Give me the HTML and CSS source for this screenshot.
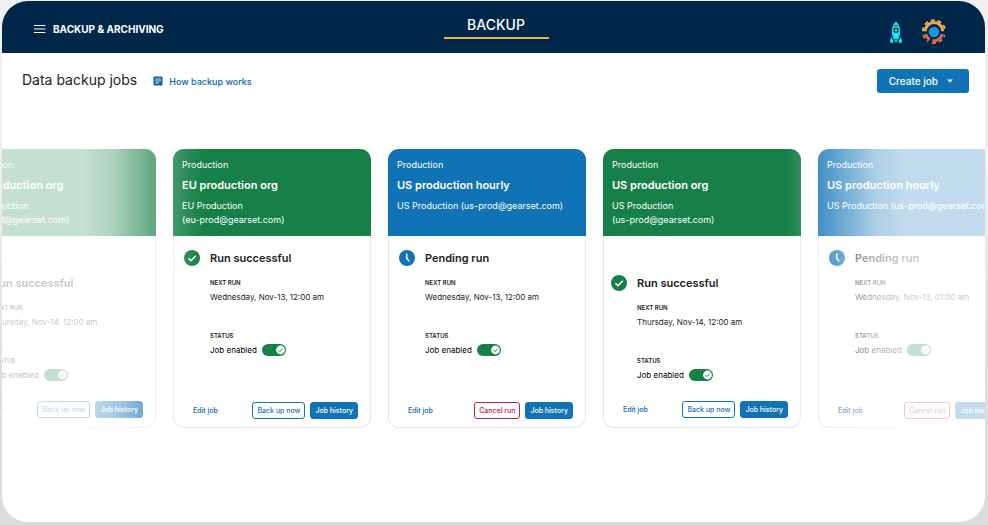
FILE: index.html
```html
<!DOCTYPE html>
<html lang="en">
<head>
	<meta charset="UTF-8">
	<meta name="viewport" content="width=device-width, initial-scale=1.0">
	<title>Data backup jobs</title>
	<link rel="stylesheet" href="styles.css">
</head>
<body>

	<svg class="sprite" aria-hidden="true">
		<symbol id="i-success" viewBox="0 0 16 16">
			<circle cx="8" cy="8" r="8" fill="#178048"/>
			<path d="M4.4 8.2l2.6 2.6 4.8-5" fill="none" stroke="#fff" stroke-width="1.5"/>
		</symbol>
		<symbol id="i-pending" viewBox="0 0 16 16">
			<circle cx="8" cy="8" r="8" fill="#0f73b6"/>
			<path d="M7.7 3.6v4.6l2.5 3.2" fill="none" stroke="#fff" stroke-width="1.5"/>
		</symbol>
		<symbol id="i-knob" viewBox="0 0 24 12">
			<circle cx="18.5" cy="6" r="4.4" fill="#fff"/>
			<path d="M16.4 6.1l1.5 1.5 2.8-3" fill="none" stroke="#178048" stroke-width="1"/>
		</symbol>
	</svg>

	<div class="window">
		<header class="topbar">
			<div class="brand">
				<button type="button" class="menu" aria-label="Menu">
					<svg width="12" height="10" viewBox="0 0 12 10"><path d="M0 1.5h11.5M0 5h11.5M0 8.5h11.5" stroke="#fff" stroke-width="1.2"/></svg>
				</button>
				<span>BACKUP &amp; ARCHIVING</span>
			</div>
			<a class="tab" href="#">BACKUP</a>
			<div class="tools">
				<svg width="14" height="24" viewBox="0 0 14 24">
					<g fill="#19e3f2">
						<path d="M7 1.500C4.200 4 2.900 7.200 2.900 11c0 3.300.8 6.300 2 8.500h4.200c1.200-2.200 2-5.200 2-8.500C11.100 7.200 9.800 4 7 1.500z"/>
						<path d="M5.200 20.300h3.600v1.500H5.200z"/>
						<path d="M2.700 17.200C1.500 18.500 1 20.300 1 22.700h3.300v-1.500zM11.300 17.200c1.200 1.300 1.700 3.100 1.700 5.500H9.700v-1.500z"/>
					</g>
					<path d="M4.800 5.600h4.400" stroke="#00264a" stroke-width=".6"/>
					<circle cx="7" cy="10.200" r="2" fill="#19e3f2" stroke="#00264a" stroke-width="1.300"/>
				</svg>
				<svg width="26" height="26" viewBox="0 0 26 26">
					<path class="gear-top" d="M4.300 12.300A8.700 8.700 0 0 1 21.700 12.300"/>
					<path class="gear-top gear-teeth" d="M1.900 12.300A11.100 11.100 0 0 1 24.100 12.300"/>
					<path class="gear-bottom" d="M4.700 15.200a8.700 8.700 0 0 0 4 5.400M11.500 21.600A8.700 8.700 0 0 0 21.300 15.200"/>
					<path class="gear-bottom gear-teeth" d="M2.300 15.700a11.100 11.100 0 0 0 4.800 6.700M11 23.900A11.100 11.100 0 0 0 23.700 15.700"/>
					<circle cx="13" cy="13" r="5.300" fill="#1b96dc"/>
				</svg>
			</div>
		</header>

		<div class="page-head">
			<h1>Data backup jobs</h1>
			<a class="help" href="#">
				<svg width="10" height="10" viewBox="0 0 10 10"><rect x=".5" y=".5" width="9" height="9" rx="1" fill="#14659f"/><path d="M2.200 3h5.600M2.200 5h5.600M2.200 7h3.600" stroke="#fff" stroke-width=".8"/></svg>
				How backup works
			</a>
			<button type="button" class="create">
				Create job
				<svg width="6" height="4" viewBox="0 0 6 4"><path d="M0 .5h6L3 3.500z" fill="#fff"/></svg>
			</button>
		</div>

		<main class="carousel">
			<div class="track">

				<article class="card low">
					<div class="card-head">
						<p>Production</p>
						<h2>US production org</h2>
						<p>US Production<br>(us-prod@gearset.com)</p>
					</div>
					<div class="card-body">
						<h3><svg class="state"><use href="#i-success"/></svg>Run successful</h3>
						<h4>NEXT RUN</h4>
						<p>Thursday, Nov-14, 12:00 am</p>
						<h4 class="status">STATUS</h4>
						<label class="enabled">Job enabled
							<span class="toggle"><input type="checkbox" checked><svg><use href="#i-knob"/></svg></span>
						</label>
					</div>
					<div class="card-foot">
						<a href="#">Edit job</a>
						<button type="button">Back up now</button>
						<button type="button" class="solid">Job history</button>
					</div>
				</article>

				<article class="card">
					<div class="card-head">
						<p>Production</p>
						<h2>EU production org</h2>
						<p>EU Production<br>(eu-prod@gearset.com)</p>
					</div>
					<div class="card-body">
						<h3><svg class="state"><use href="#i-success"/></svg>Run successful</h3>
						<h4>NEXT RUN</h4>
						<p>Wednesday, Nov-13, 12:00 am</p>
						<h4 class="status">STATUS</h4>
						<label class="enabled">Job enabled
							<span class="toggle"><input type="checkbox" checked><svg><use href="#i-knob"/></svg></span>
						</label>
					</div>
					<div class="card-foot">
						<a href="#">Edit job</a>
						<button type="button">Back up now</button>
						<button type="button" class="solid">Job history</button>
					</div>
				</article>

				<article class="card pending">
					<div class="card-head">
						<p>Production</p>
						<h2>US production hourly</h2>
						<p>US Production (us-prod@gearset.com)</p>
					</div>
					<div class="card-body">
						<h3><svg class="state"><use href="#i-pending"/></svg>Pending run</h3>
						<h4>NEXT RUN</h4>
						<p>Wednesday, Nov-13, 12:00 am</p>
						<h4 class="status">STATUS</h4>
						<label class="enabled">Job enabled
							<span class="toggle"><input type="checkbox" checked><svg><use href="#i-knob"/></svg></span>
						</label>
					</div>
					<div class="card-foot">
						<a href="#">Edit job</a>
						<button type="button" class="cancel">Cancel run</button>
						<button type="button" class="solid">Job history</button>
					</div>
				</article>

				<article class="card low">
					<div class="card-head">
						<p>Production</p>
						<h2>US production org</h2>
						<p>US Production<br>(us-prod@gearset.com)</p>
					</div>
					<div class="card-body">
						<h3><svg class="state"><use href="#i-success"/></svg>Run successful</h3>
						<h4>NEXT RUN</h4>
						<p>Thursday, Nov-14, 12:00 am</p>
						<h4 class="status">STATUS</h4>
						<label class="enabled">Job enabled
							<span class="toggle"><input type="checkbox" checked><svg><use href="#i-knob"/></svg></span>
						</label>
					</div>
					<div class="card-foot">
						<a href="#">Edit job</a>
						<button type="button">Back up now</button>
						<button type="button" class="solid">Job history</button>
					</div>
				</article>

				<article class="card pending">
					<div class="card-head">
						<p>Production</p>
						<h2>US production hourly</h2>
						<p>US Production (us-prod@gearset.com)</p>
					</div>
					<div class="card-body">
						<h3><svg class="state"><use href="#i-pending"/></svg>Pending run</h3>
						<h4>NEXT RUN</h4>
						<p>Wednesday, Nov-13, 01:00 am</p>
						<h4 class="status">STATUS</h4>
						<label class="enabled">Job enabled
							<span class="toggle"><input type="checkbox" checked><svg><use href="#i-knob"/></svg></span>
						</label>
					</div>
					<div class="card-foot">
						<a href="#">Edit job</a>
						<button type="button" class="cancel">Cancel run</button>
						<button type="button" class="solid">Job history</button>
					</div>
				</article>

			</div>
		</main>
	</div>

</body>
</html>
```
FILE: styles.css
```css
:root{
	--navy: #00264a;
	--blue: #0f73b6;
	--green: #178048;
	--red: #c8203f;
	font-family: Inter, "Liberation Sans", sans-serif;
	color: #222;
}

*{
	box-sizing: border-box;
}

body{
	display: flex;
	min-height: 100vh;
	margin: 0;
	padding: 1px 3px 3px 2px;
	background: linear-gradient(#f0f0f0 30%, #dcdcdc 80%);
}

h1, h2, h3, h4, p{
	margin: 0;
}

a{
	text-decoration: none;
}

button{
	font-family: inherit;
	cursor: pointer;
}

svg{
	display: block;
	flex: none;
}

.sprite{
	position: absolute;
	width: 0;
	height: 0;
}

.window{
	flex: 1;
	min-width: 0;
	overflow: hidden;
	border-radius: 26px;
	background: #fff;
}

/* top bar */

.topbar{
	display: grid;
	grid-template-columns: 1fr auto 1fr;
	align-items: center;
	height: 52px;
	padding: 0 27px 4px 32px;
	background: var(--navy);
	color: #fff;
}

.brand{
	display: flex;
	align-items: center;
	gap: 7px;
	padding-top: 8px;
	font-size: 10px;
	font-weight: 700;
}

.menu{
	padding: 0;
	border: 0;
	background: none;
}

.tab{
	width: 105px;
	padding: 4px 0 2px;
	border-bottom: 2px solid #f0b03c;
	color: #fff;
	font-size: 14px;
	font-weight: 500;
	line-height: 20px;
	text-align: center;
}

.tools{
	display: flex;
	justify-content: flex-end;
	align-items: center;
	gap: 18px;
	padding: 14px 11px 0 0;
}

.gear-top, .gear-bottom{
	fill: none;
	stroke: #f0a848;
	stroke-width: 3;
}

.gear-bottom{
	stroke: #d96b45;
}

.gear-teeth{
	stroke-width: 2;
	stroke-dasharray: 4 3;
}

/* page heading */

.page-head{
	display: flex;
	align-items: center;
	padding: 16px 16px 0 20px;
}

h1{
	font-size: 14px;
	font-weight: 400;
	line-height: 20px;
	padding-bottom: 2px;
}

.help{
	display: flex;
	align-items: center;
	gap: 6px;
	margin-left: 16px;
	color: #14659f;
	font-size: 9px;
	font-weight: 500;
}

.create{
	display: flex;
	align-items: center;
	gap: 9px;
	height: 24px;
	margin-left: auto;
	padding: 0 16px 0 12px;
	border: 0;
	border-radius: 3px;
	background: var(--blue);
	color: #fff;
	font-size: 10px;
	font-weight: 500;
}

/* job cards */

.carousel{
	position: relative;
	overflow: hidden;
	margin-top: 50px;
	padding: 6px 0;
}

/* fades the cards at both ends */
.carousel::before, .carousel::after{
	content: "";
	position: absolute;
	z-index: 1;
	top: 0;
	bottom: 0;
	left: 0;
	width: 200px;
	background: linear-gradient(to right, rgba(255,255,255,.75) 40%, rgba(255,255,255,.65) 55%, rgba(255,255,255,.3) 77%, rgba(255,255,255,0));
	pointer-events: none;
}

.carousel::after{
	left: auto;
	right: 0;
	transform: scaleX(-1);
}

.track{
	display: flex;
	gap: 17px;
	margin-left: -44px;
}

.card{
	display: flex;
	flex: none;
	flex-direction: column;
	width: 198px;
	min-height: 279px;
	overflow: hidden;
	border-radius: 11px;
	box-shadow: inset 0 0 0 1px #e6e8ea;
}

.card-head{
	min-height: 87px;
	padding: 9px 9px 0;
	background: var(--green);
	color: #fff;
	font-size: 9px;
	line-height: 14px;
}

.pending .card-head{
	background: var(--blue);
}

h2{
	margin: 5px 0 6px;
	font-size: 11px;
	font-weight: 600;
	line-height: 16px;
}

.card-body{
	padding: 14px 12px 0 37px;
	font-size: 8px;
	line-height: 12px;
}

.low .card-body{
	padding: 39px 12px 0 34px;
}

h3{
	display: flex;
	align-items: center;
	gap: 10px;
	margin-left: -26px;
	font-size: 11px;
	font-weight: 600;
	line-height: 16px;
}

.state{
	width: 16px;
	height: 16px;
}

h4{
	margin: 12px 0 3px;
	font-size: 6px;
	font-weight: 600;
	line-height: 10px;
}

.status{
	margin-top: 28px;
}

.enabled{
	display: flex;
	align-items: center;
	gap: 5px;
	color: #000;
}

.toggle{
	display: grid;
}

.toggle input, .toggle svg{
	grid-area: 1 / 1;
	width: 24px;
	height: 12px;
	margin: 0;
}

.toggle input{
	appearance: none;
	border-radius: 6px;
	background: #9aa3ab;
}

.toggle input:checked{
	background: var(--green);
}

.toggle svg{
	pointer-events: none;
}

.card-foot{
	display: flex;
	align-items: center;
	gap: 5px;
	margin-top: auto;
	padding: 0 13px 9px 20px;
	font-size: 7px;
	font-weight: 500;
}

.low .card-foot{
	padding-bottom: 10px;
}

.card-foot a{
	margin-right: auto;
	color: #14659f;
}

.card-foot button{
	height: 17px;
	padding: 0 4px;
	border: 1px solid var(--blue);
	border-radius: 3px;
	background: #fff;
	color: var(--blue);
	font-size: 7px;
	font-weight: 500;
}

.card-foot .solid{
	background: var(--blue);
	color: #fff;
}

.card-foot .cancel{
	border-color: var(--red);
	color: var(--red);
}
```
